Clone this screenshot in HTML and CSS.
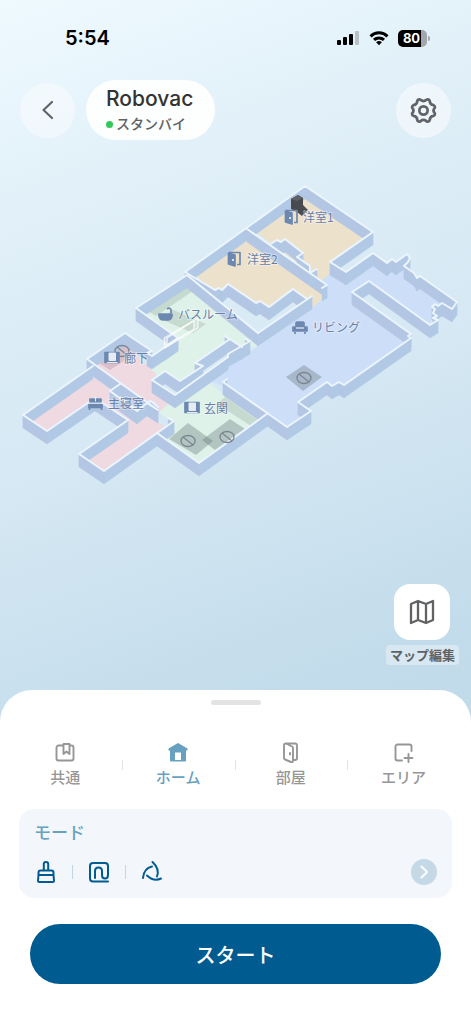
FILE: index.html
```html
<!DOCTYPE html>
<html lang="ja">
<head>
  <meta charset="UTF-8" />
  <meta name="viewport" content="width=device-width, initial-scale=1.0" />
  <title>Robovac</title>
  <link rel="stylesheet" href="styles.css">
</head>
<body>
  <div class="app">
    <div class="status-bar">
      <span class="time">5:54</span>
      <div class="status-icons">
        <svg width="23" height="16" viewBox="0 0 23 16">
          <rect x="0" y="10" width="4" height="5" rx="1" />
          <rect x="6" y="7" width="4" height="8" rx="1" />
          <rect x="12" y="4" width="4" height="11" rx="1" />
          <rect x="18" y="1" width="4" height="14" rx="1" opacity="0.2" />
        </svg>
        <svg width="20" height="16" viewBox="0 0 20 16" fill="none" stroke="#000" stroke-width="3">
          <path d="M1.5 6.3a12.2 12.2 0 0 1 17 0M5 9.9a7.2 7.2 0 0 1 10 0" />
          <path d="M10 15.3l-2.9-3a4.2 4.2 0 0 1 5.8 0z" fill="#000" stroke="none" />
        </svg>
        <div class="battery"><span>80</span></div>
      </div>
    </div>

    <header class="header">
      <button class="round-btn" type="button" aria-label="戻る">
        <svg width="24" height="24" viewBox="0 0 24 24" fill="none" stroke="#606468" stroke-width="2.2" stroke-linecap="round" stroke-linejoin="round">
          <path d="M16 4l-8.500 8 8.500 8" />
        </svg>
      </button>
      <div class="device">
        <h1>Robovac</h1>
        <p><span class="dot"></span>スタンバイ</p>
      </div>
      <button class="round-btn settings" type="button" aria-label="設定">
        <svg width="27" height="27" viewBox="0 0 28 28" fill="none" stroke="#606468" stroke-width="2.800" stroke-linejoin="round">
          <path d="M8 3.200Q9.500 1.800 11 3Q14 5.400 17 3Q18.500 1.800 20 3.200L20.500 4.200Q20.500 8 24.500 8.500Q26 9 25.800 11Q23 14 25.800 17Q26 19 24.500 19.500Q20.500 20 20.500 23.800L20 24.800Q18.500 26.200 17 25Q14 22.600 11 25Q9.500 26.200 8 24.800L7.500 23.800Q7.500 20 3.500 19.500Q2 19 2.200 17Q5 14 2.200 11Q2 9 3.500 8.500Q7.500 8 7.500 4.200Z" />
          <circle cx="14" cy="14" r="4.300" />
        </svg>
      </button>
    </header>

    <main class="map-area">
      <svg class="map" viewBox="0 160 471 340" role="img" aria-label="マップ">
        <g class="floors">
          <path class="beige" d="M305 197L363 238 330 262V275L322 281 257 233Z" />
          <path class="beige" d="M247 241L326 297 312 308 293 303 269 315 256 313 228 292 215 297 196 275Z" />
          <path class="blue" d="M322 280L332 272 346 284 373 266 387 276 396 272 404 268V278L452 312 433 317 430 324 369 281 352 292 411 335V339L344 387 339 385 332 388 327 385 298 404 311 412 287 428 223 386 208 380 263 343 326 297Z" />
          <path class="green" d="M187 285L262 338V344L250 348 228 352 195 377 180 390 165 382 158 381 150 371 151 360 178 340 143 316Z" />
          <path class="green" d="M208 382L223 394 268 414 199 463 157 433 172 422 158 412 168 401 178 395Z" />
          <path class="pink" d="M125 345L156 374 153 390 170 402 158 413 94 366Z" />
          <path class="pink" d="M94 377L113 391 137 411 149 416 165 427 104 471 79 454 128 420 95 398 47 431 23 415Z" />
          <path class="shade" d="M185 286l8 5-37 25-10-6zM171 309l35 15-13 9-28-12z" />
          <path class="shade" d="M225 397l34 24-8 5-34-22z" />
          <path class="shade-pink" d="M124 345l12 8-26 17-13-8z" />
        </g>
        <g class="zones">
          <path d="M304 365l18 12-19 14-17-14z" />
          <path d="M188 423l25 18-17 14-27-16z" />
          <path d="M230 419l15 10-30 21-13-10z" />
        </g>
        <g id="faces"></g>
        <g id="edges"></g>
        <g class="ban">
          <g id="ban"><ellipse cx="304" cy="378" rx="7" ry="5.500" /><path d="M299 374l10 8" /></g>
          <use href="#ban" x="-116" y="63" />
          <use href="#ban" x="-77" y="59" />
          <use href="#ban" x="-182" y="-27" />
        </g>
        <path class="glass" d="M164 338l34-20v10l-33 20zM167 338v7l27-16v-8z" />
        <path d="M291 199l7-4 5 3v7l5 5-6 6-5-4-6-3z" fill="#484a4e" />
        <path d="M291 199l7-4 5 3-6 3z" fill="#606265" />

        <g class="room-icons">
          <g id="door">
            <path d="M285.500 211l6.500 2v11l-6.500-2z" class="solid" />
            <path d="M286 210.500h11v12h-3" />
            <circle cx="290" cy="218" r="1" fill="#fff" stroke="none" />
          </g>
          <use href="#door" x="-57" y="42" />
          <g>
            <path d="M159 314h13v2q-1 4-4 4h-5q-3 0-4-4z" class="solid" />
            <path d="M171 313v-3q-1-3-4-1" />
          </g>
          <g>
            <path d="M296 327v-4q0-1 1-1h6q1 0 1 1v4z" class="solid" />
            <path d="M293 327h2v2h10v-2h2v4h-14z" class="solid" />
            <path d="M295 332v2M305 332v2" />
            <path d="M296 328h8" class="gap" />
          </g>
          <g id="passage">
            <path d="M105 352.500h14v10h-14z" class="solid" />
            <path d="M109 353h6.500v7.500H109z" class="hollow" />
            <path d="M107 362.500h10.500" class="gap" />
          </g>
          <use href="#passage" x="80" y="50" />
          <g>
            <path d="M90 399h11v3H90zM89 404.500h13v3H89z" class="solid" />
            <path d="M89.500 408v2M101.500 408v2" />
            <path d="M88 403.200h15M95.500 398v3.500" class="gap" />
          </g>
        </g>
        <g class="room-labels">
          <text x="303" y="222">洋室1</text>
          <text x="247" y="264">洋室2</text>
          <text x="178" y="319">バスルーム</text>
          <text x="312" y="332">リビング</text>
          <text x="124" y="363">廊下</text>
          <text x="108" y="408">主寝室</text>
          <text x="204" y="413">玄関</text>
        </g>
      </svg>

      <div class="map-edit">
        <button type="button" id="edit-map" aria-labelledby="edit-label">
          <svg width="26" height="26" viewBox="0 0 26 26" fill="none" stroke="#606264" stroke-width="2.300" stroke-linejoin="round">
            <path d="M2 5l7-3 8 3 7-3v19l-7 3-8-3-7 3zM9 2v19M17 5v19" />
          </svg>
        </button>
        <label id="edit-label" for="edit-map">マップ編集</label>
      </div>
    </main>

    <section class="sheet">
      <div class="handle"></div>
      <nav class="tabs">
        <button type="button">
          <svg viewBox="0 0 22 22">
            <path d="M8.500 3.500H4.500a2 2 0 0 0-2 2v11a2 2 0 0 0 2 2h13a2 2 0 0 0 2-2v-11a2 2 0 0 0-2-2h-2M9.500 2h6v10l-3-2.500-3 2.500z" />
          </svg>
          共通
        </button>
        <button type="button" class="active">
          <svg viewBox="0 0 22 22">
            <path d="M11 1L20.500 6.500V8.500H19V18.500q0 1-1 1H4q-1 0-1-1V8.500H1.500V6.500Z" fill="#68a0c0" stroke="none" />
            <path d="M8 10.500h6v7.500h-6z" fill="#fff" stroke="none" />
          </svg>
          ホーム
        </button>
        <button type="button">
          <svg viewBox="0 0 22 22">
            <path d="M6 1.500h9q2 0 2 2V16q0 2-2 2h-2M6 1.500Q4 1.500 4 3.500V16q0 1 1 1.500l6 2.500q2 .5 2-1V6q0-1-1-1.500zM10 11v1.500" />
          </svg>
          部屋
        </button>
        <button type="button">
          <svg viewBox="0 0 22 22">
            <path d="M9 18.500H4.500a2 2 0 0 1-2-2v-12a2 2 0 0 1 2-2h12a2 2 0 0 1 2 2V9M15.500 12v8M11.500 16h8" />
          </svg>
          エリア
        </button>
      </nav>

      <div class="mode">
        <h2>モード</h2>
        <div class="mode-row">
          <svg viewBox="0 0 24 24">
            <path d="M9.800 10.500V4q0-2 2.200-2t2.200 2v6.500M6.500 10.500h11q2 0 2 2V15h-15v-2.500q0-2 2-2zM4.500 15L4 20.500q0 1.500 1.500 1.500h13q1.500 0 1.500-1.500L19.500 15" />
          </svg>
          <span class="divider"></span>
          <svg viewBox="0 0 24 24">
            <path d="M21 21.500H6q-3 0-3-3V6q0-3 3-3h12q3 0 3 3v9q0 3.500-3 3.500t-3-3.500v-4q0-3.500-3.500-3.500T8 11v7" />
          </svg>
          <span class="divider"></span>
          <svg viewBox="0 0 24 24">
            <path d="M3 18Q4 8 12 6.500M12.500 2Q20 9 17 16.500M7 15.500Q14 22 21 18.500" />
          </svg>
          <button class="mode-more" type="button" aria-label="モードを変更">
            <svg viewBox="0 0 24 24"><path d="M9.500 6.500l5.500 5.500-5.500 5.500" /></svg>
          </button>
        </div>
      </div>

      <button class="start" type="button">スタート</button>
    </section>
  </div>

  <script>
    // top edges of the walls, each one drops down by WALL to the floor
    const WALL = 13;
    const walls = [
      [[185,272],[305,186],[373,232],[330,262],[346,272],[373,253],[387,263],[392,259],[396,262],[407,254],[410,258],[408,262],[404,266],[414,273],[417,278],[420,276],[457,302],[452,309],[442,303],[438,306],[435,304],[432,307],[435,309],[433,313],[437,316],[433,318],[438,320],[430,325],[369,281],[352,292],[411,334],[408,336],[411,338],[344,385],[339,382],[332,386],[327,382],[298,402],[311,411],[287,427],[223,382],[227,379]],
      [[247,229],[327,285],[322,288]],
      [[272,243],[277,240],[281,242],[285,239],[303,253],[297,257],[310,266],[310,273],[317,269]],
      [[185,272],[215,290],[219,288],[222,290],[228,284],[256,303],[260,301],[269,307],[293,289],[307,299],[312,296],[258,333]],
      [[258,333],[187,275],[136,308],[178,338],[152,356],[147,353],[152,351],[125,333],[87,359],[158,410],[147,403],[137,411],[110,391],[120,384]],
      [[93,366],[23,415],[47,431],[95,398],[128,420],[79,454],[104,471],[174,421],[168,418]],
      [[157,433],[199,463],[268,413]],
      [[178,338],[164,348]],
      [[225,336],[230,339],[195,363],[203,366],[180,381],[165,371],[152,380],[175,395],[228,357],[228,354],[250,341],[245,339]],
      [[225,336],[242,347]],
      [[147,403],[151,401],[158,407]]
    ];

    function draw(parent, d, cls) {
      const path = document.createElementNS("http://www.w3.org/2000/svg", "path");
      path.setAttribute("d", d);
      path.setAttribute("class", cls);
      document.getElementById(parent).appendChild(path);
    }

    const faces = [];
    walls.forEach(function (wall) {
      draw("edges", "M" + wall.join("L"), "edge");
      for (let i = 1; i < wall.length; i++) {
        const [a, b] = [wall[i - 1], wall[i]].sort((p, q) => p[0] - q[0]);
        faces.push({ a, b, y: a[1] + b[1] });
      }
    });

    // far walls first
    faces.sort((p, q) => p.y - q.y);
    faces.forEach(function (f) {
      const d = `M${f.a}L${f.b}v${WALL}L${f.a[0]} ${f.a[1] + WALL}z`;
      draw("faces", d, f.b[1] > f.a[1] ? "face face-left" : "face face-right");
    });
  </script>
</body>
</html>
```

FILE: styles.css
```css
* {
  box-sizing: border-box;
}
body {
  margin: 0;
  font-family: Inter, "Noto Sans CJK JP", sans-serif;
  color: #333;
}
h1, h2, p {
  margin: 0;
}
button {
  padding: 0;
  border: none;
  font: inherit;
  cursor: pointer;
}
.app {
  display: flex;
  flex-direction: column;
  min-height: 100vh;
  background: linear-gradient(160deg, #effaff 0%, #e0eff8 20%, #d5e8f3 42%, #c3dceb 66%, #b8d5e6 100%);
}

/* status bar */
.status-bar {
  display: flex;
  justify-content: space-between;
  align-items: center;
  height: 76px;
  padding: 0 44px 0 65px;
}
.time {
  color: #000;
  font-size: 20px;
  font-weight: 600;
}
.status-icons {
  display: flex;
  align-items: center;
  gap: 9px;
}
.battery {
  position: relative;
  width: 29px;
  height: 17px;
  padding-right: 2px;
  border-radius: 5px;
  background: linear-gradient(90deg, #000 80%, #a0a8ae 80%);
  color: #fff;
  font-size: 13px;
  font-weight: 700;
  line-height: 17px;
  text-align: center;
}
.battery::after {
  content: "";
  position: absolute;
  top: 6px;
  right: -3px;
  width: 2px;
  height: 5px;
  border-radius: 0 2px 2px 0;
  background: #a0a8ae;
}

/* header */
.header {
  display: flex;
  align-items: center;
  gap: 11px;
  padding: 4px 20px 0;
}
.round-btn {
  display: flex;
  align-items: center;
  justify-content: center;
  width: 55px;
  height: 55px;
  border-radius: 50%;
  background: rgba(247, 250, 253, 0.65);
}
.settings {
  margin-left: auto;
}
.device {
  height: 60px;
  padding: 6px 22px 0 20px;
  border-radius: 30px;
  background: #fdfefe;
}
.device h1 {
  font-size: 21px;
  font-weight: 500;
  line-height: 26px;
}
.device p {
  display: flex;
  align-items: center;
  gap: 3px;
  color: #606264;
  font-size: 14px;
  font-weight: 500;
  line-height: 24px;
}
.dot {
  width: 7px;
  height: 7px;
  border-radius: 50%;
  background: #34c759;
}

/* map */
.map-area {
  flex: 1;
  display: flex;
  flex-direction: column;
  padding: 20px 0 25px;
}
.map {
  display: block;
  width: 100%;
}
.beige { fill: #ece2cc; }
.blue { fill: #cddef8; }
.green { fill: #def2e9; }
.pink { fill: #efdae2; }
.shade { fill: #c6dacf; }
.shade-pink { fill: #d9bfc9; }
.zones {
  fill: rgba(90, 105, 110, 0.33);
}
.ban {
  fill: none;
  stroke: #7b8490;
  stroke-width: 1.3;
}
.face { stroke-width: 0.4; }
.face-left { fill: #b3c6e3; stroke: #b3c6e3; }
.face-right { fill: #b1c9e5; stroke: #b1c9e5; }
.edge {
  fill: none;
  stroke: #ecf5fe;
  stroke-width: 2;
  stroke-linejoin: round;
  stroke-linecap: round;
}
.glass {
  fill: rgba(240, 246, 250, 0.35);
  stroke: #fff;
  stroke-width: 1;
}
.room-icons {
  fill: none;
  stroke: #6d88b0;
  stroke-width: 1.7;
  stroke-linejoin: round;
}
.room-icons .solid {
  fill: #6d88b0;
}
.room-icons .hollow {
  fill: #e6ebf4;
  stroke: #e6ebf4;
  stroke-width: 1;
}
.room-icons .gap {
  stroke: #e6ebf4;
  stroke-width: 1;
}
.room-labels {
  fill: #6780a8;
  stroke: rgba(255, 255, 255, 0.4);
  stroke-width: 2;
  paint-order: stroke;
  font-family: "Noto Sans CJK JP", sans-serif;
  font-size: 12px;
}
.map-edit {
  display: flex;
  flex-direction: column;
  align-items: center;
  gap: 5px;
  align-self: flex-end;
  margin-top: auto;
  padding-right: 12px;
}
.map-edit button {
  display: flex;
  align-items: center;
  justify-content: center;
  width: 56px;
  height: 56px;
  border-radius: 16px;
  background: #fff;
}
.map-edit label {
  padding: 0 4px;
  border-radius: 4px;
  background: rgba(225, 237, 245, 0.7);
  color: #5d6265;
  font-size: 13px;
  font-weight: 700;
  line-height: 20px;
}

/* bottom sheet */
.sheet {
  padding: 10px 19px 40px;
  border-radius: 32px 32px 0 0;
  background: #fff;
}
.handle {
  width: 50px;
  height: 5px;
  margin: 0 auto;
  border-radius: 3px;
  background: #e3e3e3;
}
.tabs {
  display: grid;
  grid-template-columns: repeat(4, 1fr);
  margin: 37px -8px 18px -10px;
}
.tabs button {
  position: relative;
  display: flex;
  flex-direction: column;
  align-items: center;
  gap: 1px;
  background: none;
  color: #969696;
  font-size: 15px;
  font-weight: 500;
  line-height: 26px;
}
.tabs button + button::before {
  content: "";
  position: absolute;
  top: 18px;
  left: 0;
  width: 1px;
  height: 10px;
  background: #e3e3e3;
}
.tabs .active {
  color: #68a0c0;
}
.tabs svg {
  width: 22px;
  height: 22px;
  fill: none;
  stroke: #969696;
  stroke-width: 1.9;
  stroke-linecap: round;
  stroke-linejoin: round;
}
.mode {
  padding: 10px 15px 13px;
  border-radius: 15px;
  background: #f3f7fb;
}
.mode h2 {
  color: #68a0c0;
  font-size: 17px;
  font-weight: 500;
  line-height: 28px;
}
.mode-row {
  display: flex;
  align-items: center;
  gap: 14px;
  margin-top: 12px;
}
.mode-row svg {
  width: 24px;
  height: 24px;
  fill: none;
  stroke: #005c90;
  stroke-width: 2;
  stroke-linecap: round;
  stroke-linejoin: round;
}
.divider {
  width: 1px;
  height: 14px;
  background: #bfd7e5;
}
.mode-row .mode-more {
  display: flex;
  align-items: center;
  justify-content: center;
  width: 26px;
  height: 26px;
  margin-left: auto;
  border-radius: 50%;
  background: #c4d8e5;
}
.mode-more svg {
  stroke: #fff;
}
.start {
  display: block;
  width: calc(100% - 22px);
  height: 60px;
  margin: 26px auto 0;
  border-radius: 30px;
  background: #005c90;
  color: #fff;
  font-size: 20px;
  font-weight: 500;
}
```
